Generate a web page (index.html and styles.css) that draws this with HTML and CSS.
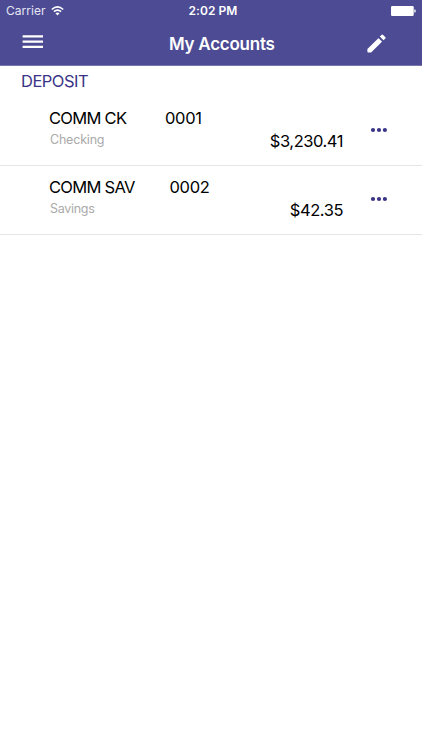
FILE: index.html
```html
<!DOCTYPE html>
<html lang="en">
<head>
<meta charset="utf-8">
<title>My Accounts</title>
<link rel="stylesheet" href="styles.css">
</head>
<body>
<header class="header">
  <div class="status">
    <div class="carrier"><span>Carrier</span>
      <svg class="wifi" width="13" height="10" viewBox="0 0 13 10" fill="none" stroke="#fff" stroke-width="1.6"><path d="M.8 3.5Q6.5-1.7 12.2 3.5M2.9 5.7Q6.5 2.4 10.1 5.7"/><path d="M4.5 7.2Q6.5 5.6 8.5 7.2L6.5 9.4Z" fill="#fff" stroke="none"/></svg>
    </div>
    <span class="time">2:02 PM</span>
    <svg class="battery" width="25" height="10" viewBox="0 0 25 10"><rect width="22.7" height="10" rx="1.2" fill="#fff"/><path d="M23.3 3.2Q24.8 3.4 24.8 5T23.3 6.8Z" fill="#fff"/></svg>
  </div>
  <div class="navbar">
    <svg class="menu" width="21" height="13" viewBox="0 0 21 13"><path d="M.6 1.4H21M.6 6.7H21M.6 11.9H21" stroke="#fff" stroke-width="2.2"/></svg>
    <h1 class="title">My Accounts</h1>
    <svg class="edit" width="19" height="19" viewBox="0 0 19 19" fill="#fff"><path d="M.4 15.1L11.1 4.4Q11.5 4 11.9 4.4L14.7 7.2Q15.1 7.6 14.7 8L4.1 18.6H1.2Q.4 18.6.4 17.8Z"/><path d="M12.8 2.6L14.7.7Q15.3.1 15.9.7L18.4 3.2Q19 3.8 18.4 4.4L16.5 6.3Z"/></svg>
  </div>
</header>
<main>
  <h2 class="section"><span>DEPOSIT</span></h2>
  <section class="account">
    <div class="info">
      <div class="line"><span class="name name-ck">COMM CK</span><span class="number">0001</span></div>
      <div class="kind">Checking</div>
    </div>
    <div class="amount">$3,230.41</div>
    <svg class="more" width="17" height="6" viewBox="0 0 17 6" fill="#393487"><circle cx="3" cy="3" r="2.1"/><circle cx="9" cy="3" r="2.1"/><circle cx="14.9" cy="3" r="2.1"/></svg>
  </section>
  <section class="account">
    <div class="info">
      <div class="line"><span class="name name-sav">COMM SAV</span><span class="number">0002</span></div>
      <div class="kind kind-savings">Savings</div>
    </div>
    <div class="amount">$42.35</div>
    <svg class="more" width="17" height="6" viewBox="0 0 17 6" fill="#393487"><circle cx="3" cy="3" r="2.1"/><circle cx="9" cy="3" r="2.1"/><circle cx="14.9" cy="3" r="2.1"/></svg>
  </section>
</main>
</body>
</html>
```
FILE: styles.css
```css
* { box-sizing: border-box; }
body {
  margin: 0;
  min-height: 750px;
  background: #fff;
  color: #000;
  font-family: Inter, sans-serif;
}
.header {
  height: 66px;
  background: #4c4b93;
  border-bottom: 1px solid #7776ad;
  color: #fff;
}
.status {
  display: grid;
  grid-template-columns: 1fr auto 1fr;
  height: 22px;
  padding: 0 6px;
  align-items: center;
  font-size: 12px;
  line-height: 22px;
}
.carrier { display: flex; align-items: center; gap: 5px; color: #e6e6f3; letter-spacing: .05px; }
.time { margin: 0 -2px 0 2px; font-weight: 600; letter-spacing: .05px; }
.battery { justify-self: end; }
.navbar {
  display: grid;
  grid-template-columns: 125px 1fr 42px;
  height: 43px;
  padding: 0 36px 0 22px;
  align-items: center;
}
.menu { margin-top: -4px; }
.title {
  margin: 0;
  padding-left: 22px;
  font-size: 17px;
  font-weight: 600;
  line-height: 22px;
  letter-spacing: -.25px;
}
.edit { justify-self: end; }
.section {
  height: 31px;
  margin: 0;
  padding-left: 21px;
  color: #393487;
  font-size: 16.5px;
  font-weight: 400;
  line-height: 30px;
  letter-spacing: -.5px;
}
.account {
  display: grid;
  grid-template-columns: 1fr auto 17px;
  height: 69px;
  padding: 10px 35px 0 49px;
  border-bottom: 1px solid #e6e6e6;
}
.info { min-width: 0; }
.line { display: flex; font-size: 16.5px; line-height: 22px; }
.name { letter-spacing: -.7px; }
.name-ck { width: 116px; }
.name-sav { width: 120.5px; }
.number { letter-spacing: -.3px; }
.kind {
  padding-left: 1px;
  color: #aaa;
  font-size: 12.5px;
  line-height: 22px;
  letter-spacing: -.2px;
}
.kind-savings { letter-spacing: -.3px; }
.amount {
  margin-right: 27px;
  padding-top: 23px;
  font-size: 16.5px;
  line-height: 22px;
  letter-spacing: -.45px;
}
.more { margin-top: 20px; }
```
